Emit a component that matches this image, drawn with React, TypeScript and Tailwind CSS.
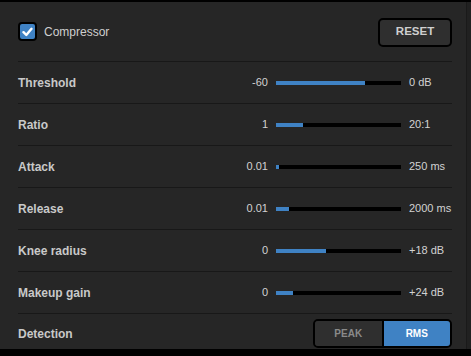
import React, { useState } from 'react';

type Param = {
  label: string;
  min: string;
  max: string;
  fill: number; // px of 125px track
};

const params: Param[] = [
  { label: 'Threshold', min: '-60', max: '0 dB', fill: 89 },
  { label: 'Ratio', min: '1', max: '20:1', fill: 27 },
  { label: 'Attack', min: '0.01', max: '250 ms', fill: 3 },
  { label: 'Release', min: '0.01', max: '2000 ms', fill: 13 },
  { label: 'Knee radius', min: '0', max: '+18 dB', fill: 50 },
  { label: 'Makeup gain', min: '0', max: '+24 dB', fill: 17 },
];

const SliderRow: React.FC<{ p: Param }> = ({ p }) => (
  <div className="h-[42px] flex items-center border-t border-[#181818]">
    <span className="flex-1 text-[12px] font-bold text-[#c9c9c9]">{p.label}</span>
    <span className="w-[60px] text-right text-[11px] text-[#d2d2d2] pr-[8px]">{p.min}</span>
    <div className="w-[125px] h-[4px] bg-black flex">
      <div className="h-full bg-[#3f82c4]" style={{ width: p.fill }} />
    </div>
    <span className="w-[51px] pl-[8px] text-[11px] text-[#d2d2d2] whitespace-nowrap">{p.max}</span>
  </div>
);

export default function App() {
  const [enabled, setEnabled] = useState(true);
  const [mode, setMode] = useState<'peak' | 'rms'>('rms');

  return (
    <div className="w-[471px] h-[356px] bg-black pt-[2px] overflow-hidden" style={{ fontFamily: '"Liberation Sans", Arial, sans-serif' }}>
      <div className="h-[347px] flex">
        <div className="w-[466px] bg-[#262626] pl-[18px] pr-[14px] flex flex-col">
          {/* Header */}
          <div className="h-[59px] flex items-center justify-between">
            <button onClick={() => setEnabled(!enabled)} className="flex items-center gap-[7px]">
              <span className="w-[19px] h-[19px] rounded-[4px] border-2 border-black bg-[#3f82c4] flex items-center justify-center">
                {enabled && (
                  <svg width="11" height="10" viewBox="0 0 11 10">
                    <path d="M1.5 5.2 L4.3 8 L9.5 1.8" fill="none" stroke="#fff" strokeWidth="2.4" strokeLinecap="round" strokeLinejoin="round" />
                  </svg>
                )}
              </span>
              <span className="text-[12px] text-[#cfcfcf]">Compressor</span>
            </button>
            <button className="w-[74px] h-[29px] rounded-[5px] border-2 border-black bg-[#2f2f2f] text-[11.5px] font-bold text-[#cfcfcf] mt-[1px]">
              RESET
            </button>
          </div>

          {params.map((p) => (
            <SliderRow key={p.label} p={p} />
          ))}

          {/* Detection */}
          <div className="flex-1 flex items-start justify-between border-t border-[#181818] pt-[5px]">
            <span className="text-[12px] font-bold text-[#c9c9c9] mt-[6px]">Detection</span>
            <div className="w-[139px] h-[29px] rounded-[5px] border-2 border-black flex overflow-hidden">
              <button
                onClick={() => setMode('peak')}
                className={`flex-1 text-[10px] font-bold ${mode === 'peak' ? 'bg-[#3f82c4] text-white' : 'bg-[#2f2f2f] text-[#8a8a8a]'}`}
              >
                PEAK
              </button>
              <button
                onClick={() => setMode('rms')}
                className={`flex-1 text-[10px] font-bold border-l-2 border-black ${mode === 'rms' ? 'bg-[#3f82c4] text-white' : 'bg-[#2f2f2f] text-[#8a8a8a]'}`}
              >
                RMS
              </button>
            </div>
          </div>
        </div>
        <div className="flex-1 bg-[#212121] border-l border-[#1a1a1a]" />
      </div>
    </div>
  );
}
